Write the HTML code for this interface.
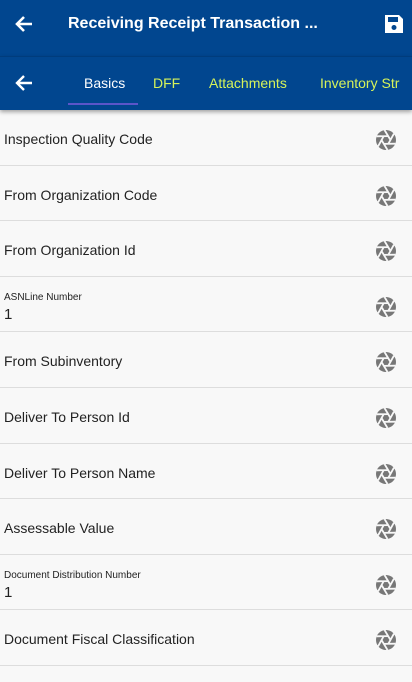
<!DOCTYPE html>
<html><head><style>
body{margin:0;width:412px;height:682px;overflow:hidden;background:#f8f8f8;font-family:"Liberation Sans",sans-serif;}
.top{height:56px;background:#01468f;position:relative;color:#fff}
.top .t{position:absolute;left:68px;top:15px;font-weight:bold;font-size:16px}
.tabs{height:53px;background:#01468f;position:relative;box-shadow:0 2px 4px rgba(0,0,0,.35);border-top:1px solid #003c7c}
.tab{position:absolute;top:18px;font-size:14px;color:#d6f35a}
.row{height:55.6px;border-bottom:1px solid #ddd;position:relative;box-sizing:border-box}
.row .l{position:absolute;left:4px;top:21px;font-size:14px;color:#222}
.row .s{position:absolute;left:4px;top:15px;font-size:10px;color:#222}
.row .v{position:absolute;left:4px;top:29px;font-size:15px;color:#222}
.row svg{position:absolute;left:375px;top:19px}
</style></head><body>
<div class="top">
<svg style="position:absolute;left:14px;top:15px" width="20" height="18" viewBox="0 0 20 18"><path d="M18 9H3M10 2L3 9l7 7" stroke="#fff" stroke-width="2.6" fill="none"/></svg>
<div class="t">Receiving Receipt Transaction ...</div>
<svg style="position:absolute;left:384px;top:14px" width="20" height="20" viewBox="0 0 20 20"><path d="M1 1h14l4 4v14H1z" fill="#fff"/><rect x="4" y="3" width="10" height="5" fill="#01468f"/><circle cx="10" cy="13.5" r="2.5" fill="#01468f"/></svg>
</div>
<div class="tabs">
<svg style="position:absolute;left:14px;top:17px" width="20" height="18" viewBox="0 0 20 18"><path d="M18 9H3M10 2L3 9l7 7" stroke="#fff" stroke-width="2.4" fill="none"/></svg>
<div class="tab" style="left:84px;color:#fff">Basics</div>
<div style="position:absolute;left:68px;top:46px;width:70px;height:2px;background:#5b55c9"></div>
<div class="tab" style="left:153px">DFF</div>
<div class="tab" style="left:209px">Attachments</div>
<div class="tab" style="left:320px">Inventory Str</div>
</div>
<div id="rows"></div>
<script>
var items=[["Inspection Quality Code"],["From Organization Code"],["From Organization Id"],["ASNLine Number","1"],["From Subinventory"],["Deliver To Person Id"],["Deliver To Person Name"],["Assessable Value"],["Document Distribution Number","1"],["Document Fiscal Classification"]];
var ic='<svg width="22" height="22" viewBox="-11 -11 22 22"><circle r="10" fill="#777"/>'+[0,60,120,180,240,300].map(function(a){return '<line x1="-1.5" y1="-10" x2="4.5" y2="0" stroke="#f8f8f8" stroke-width="1.8" transform="rotate('+a+')"/>'}).join('')+'</svg>';
var h='';items.forEach(function(it){h+='<div class="row">'+(it[1]?'<div class="s">'+it[0]+'</div><div class="v">'+it[1]+'</div>':'<div class="l">'+it[0]+'</div>')+ic+'</div>'});
document.getElementById('rows').innerHTML=h;
</script>
</body></html>
